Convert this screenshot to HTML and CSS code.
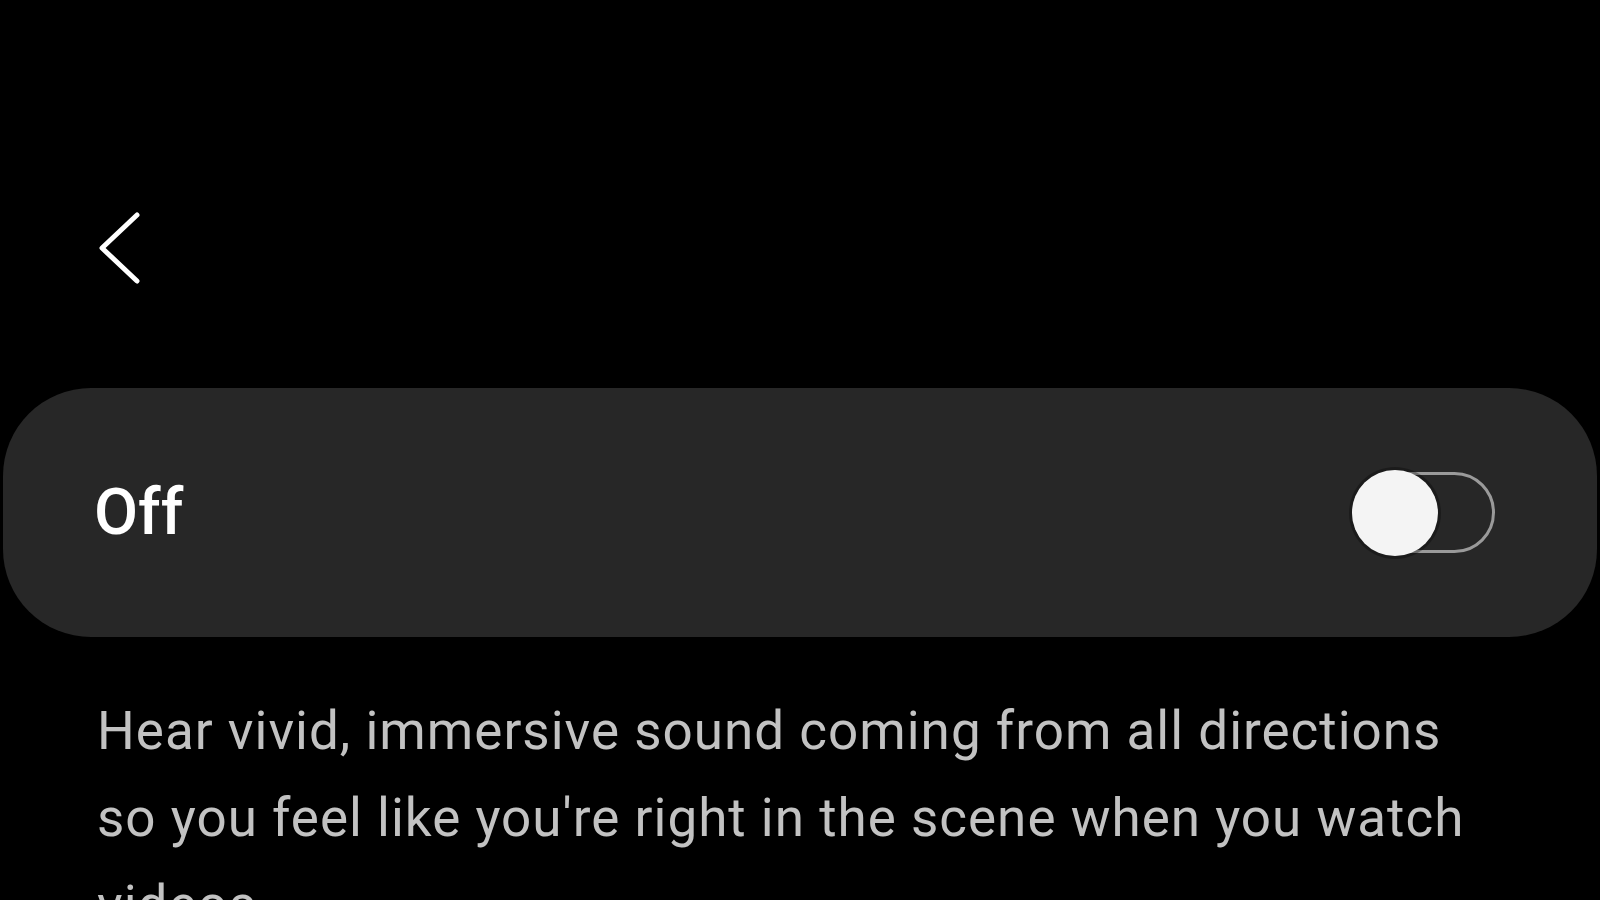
FILE: index.html
```html
<!doctype html>
<html>

<head>
    <link rel="stylesheet" href="styles.css">
</head>

<body>
    <div class="top-bar">
        <svg class="back" width="60" height="90" viewBox="0 0 60 90">
            <polyline points="47,10 12,43 47,76" fill="none" stroke="#fff" stroke-width="5" stroke-linecap="round"
                stroke-linejoin="round" />
        </svg>
    </div>

    <div class="switch-card">
        <span class="switch-label">Off</span>
        <div class="toggle">
            <div class="knob"></div>
        </div>
    </div>

    <p class="description">
        Hear vivid, immersive sound coming from all directions so you feel like you're right in the scene when you
        watch videos.
    </p>
</body>

</html>
```

FILE: styles.css
```css
html,
body {
    overflow: hidden;
    width: 100%;
    height: 100%;
    margin: 0;
}

body {
    background-color: #000;
    font-family: Roboto, "Noto Sans", sans-serif;
}

.top-bar {
    height: 388px;
    box-sizing: border-box;
    padding: 205px 0 0 90px;
}

.back {
    display: block;
}

.switch-card {
    margin: 0 3px;
    height: 249px;
    border-radius: 88px;
    background-color: #272727;
    display: flex;
    align-items: center;
    justify-content: space-between;
    padding: 0 102px 0 91px;
}

.switch-label {
    color: #fff;
    font-size: 64px;
    font-weight: 500;
}

.toggle {
    position: relative;
    width: 143px;
    height: 81px;
    box-sizing: border-box;
    border: 3px solid #9a9a9a;
    border-radius: 41px;
}

.knob {
    position: absolute;
    left: -3px;
    top: -5px;
    width: 86px;
    height: 86px;
    border-radius: 50%;
    background-color: #f4f4f4;
    box-shadow: 0 0 0 3px rgba(0, 0, 0, 0.3);
}

.description {
    margin: 51px 0 0;
    padding-left: 97px;
    width: 1390px;
    color: #c2c2c2;
    font-size: 53px;
    line-height: 87px;
    letter-spacing: 1px;
}
```
